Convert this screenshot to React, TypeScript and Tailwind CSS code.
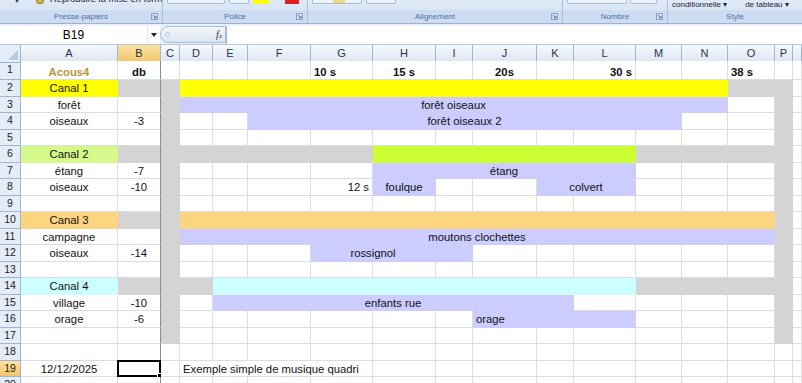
import React from "react";

type Fill = { bg: string; b: string; r: string };

const WHITE: Fill = { bg: "bg-white", b: "border-b-[#dadde2]", r: "border-r-[#dadde2]" };
const YEL: Fill = { bg: "bg-[#ffff00]", b: "border-b-[#ffff00]", r: "border-r-[#ffff00]" };
const GRY: Fill = { bg: "bg-[#d4d4d4]", b: "border-b-[#d4d4d4]", r: "border-r-[#d4d4d4]" };
const LAV: Fill = { bg: "bg-[#ccccff]", b: "border-b-[#ccccff]", r: "border-r-[#ccccff]" };
const LIM: Fill = { bg: "bg-[#ccff33]", b: "border-b-[#ccff33]", r: "border-r-[#ccff33]" };
const GRN: Fill = { bg: "bg-[#d6f98c]", b: "border-b-[#d6f98c]", r: "border-r-[#d6f98c]" };
const ORG: Fill = { bg: "bg-[#fdd580]", b: "border-b-[#fdd580]", r: "border-r-[#fdd580]" };
const CYN: Fill = { bg: "bg-[#ccffff]", b: "border-b-[#ccffff]", r: "border-r-[#ccffff]" };

type Seg = {
  c: number;
  span?: number;
  fill?: Fill;
  text?: string;
  align?: "l" | "c" | "r";
  bold?: boolean;
  gold?: boolean;
};

const GRID =
  "grid grid-cols-[21px_97px_43px_19px_33px_35px_63px_62px_63px_37px_64px_37px_62px_46px_46px_47px_18px_1fr]";

const LETTERS = ["A", "B", "C", "D", "E", "F", "G", "H", "I", "J", "K", "L", "M", "N", "O", "P", ""];

const SPAN: Record<number, string> = {
  1: "col-span-1",
  2: "col-span-2",
  3: "col-span-3",
  4: "col-span-4",
  5: "col-span-5",
  7: "col-span-7",
  8: "col-span-8",
  11: "col-span-11",
  12: "col-span-12",
};

// C and P are grey from row 2 to 17
const side = (): Seg[] => [
  { c: 2, fill: GRY },
  { c: 15, fill: GRY },
];

const rows: Seg[][] = [
  [
    { c: 0, text: "Acous4", bold: true, gold: true },
    { c: 1, text: "db", bold: true },
    { c: 6, text: "10 s", bold: true, align: "l" },
    { c: 7, text: "15 s", bold: true },
    { c: 9, text: "20s", bold: true },
    { c: 11, text: "30 s", bold: true, align: "r" },
    { c: 14, text: "38 s", bold: true, align: "l" },
  ],
  [
    { c: 0, fill: YEL, text: "Canal 1" },
    { c: 1, fill: GRY },
    { c: 2, fill: GRY },
    { c: 3, span: 11, fill: YEL },
    { c: 14, span: 2, fill: GRY },
  ],
  [{ c: 0, text: "forêt" }, ...side(), { c: 3, span: 11, fill: LAV, text: "forêt oiseaux" }],
  [
    { c: 0, text: "oiseaux" },
    { c: 1, text: "-3" },
    ...side(),
    { c: 5, span: 8, fill: LAV, text: "forêt oiseaux 2" },
  ],
  side(),
  [
    { c: 0, fill: GRN, text: "Canal 2" },
    { c: 1, fill: GRY },
    { c: 2, span: 5, fill: GRY },
    { c: 7, span: 5, fill: LIM },
    { c: 12, span: 4, fill: GRY },
  ],
  [
    { c: 0, text: "étang" },
    { c: 1, text: "-7" },
    ...side(),
    { c: 7, span: 5, fill: LAV, text: "étang" },
  ],
  [
    { c: 0, text: "oiseaux" },
    { c: 1, text: "-10" },
    ...side(),
    { c: 6, text: "12 s", align: "r" },
    { c: 7, fill: LAV, text: "foulque" },
    { c: 10, span: 2, fill: LAV, text: "colvert" },
  ],
  side(),
  [
    { c: 0, fill: ORG, text: "Canal 3" },
    { c: 1, fill: GRY },
    { c: 2, fill: GRY },
    { c: 3, span: 12, fill: ORG },
    { c: 15, fill: GRY },
  ],
  [{ c: 0, text: "campagne" }, ...side(), { c: 3, span: 12, fill: LAV, text: "moutons clochettes" }],
  [
    { c: 0, text: "oiseaux" },
    { c: 1, text: "-14" },
    ...side(),
    { c: 6, span: 2, fill: LAV, text: "rossignol" },
    { c: 8, fill: LAV },
  ],
  side(),
  [
    { c: 0, fill: CYN, text: "Canal 4" },
    { c: 1, fill: GRY },
    { c: 2, span: 2, fill: GRY },
    { c: 4, span: 8, fill: CYN },
    { c: 12, span: 4, fill: GRY },
  ],
  [
    { c: 0, text: "village" },
    { c: 1, text: "-10" },
    ...side(),
    { c: 4, span: 7, fill: LAV, text: "enfants rue" },
  ],
  [
    { c: 0, text: "orage" },
    { c: 1, text: "-6" },
    ...side(),
    { c: 9, span: 3, fill: LAV, text: "orage", align: "l" },
  ],
  side(),
  [],
  [
    { c: 0, text: "12/12/2025" },
    { c: 3, span: 4, text: "Exemple simple de musique quadri", align: "l" },
  ],
  [],
];

const Cell = ({ seg, sel }: { seg: Seg; sel?: boolean }) => {
  const fill = seg.fill ?? WHITE;
  const right = seg.c + (seg.span ?? 1) - 1 === 1 ? "border-r-[#8c8c8c]" : fill.r;
  const align =
    seg.align === "l" ? "justify-start pl-[3px]" : seg.align === "r" ? "justify-end pr-[3px]" : "justify-center";
  return (
    <div
      className={`${SPAN[seg.span ?? 1]} relative flex items-end pb-[1px] border-r border-b whitespace-nowrap overflow-visible ${fill.bg} ${fill.b} ${right} ${align}`}
    >
      {seg.text && (
        <span
          className={`leading-none ${seg.bold ? "font-bold" : ""} ${seg.gold ? "text-[#b8973a]" : "text-[#111]"}`}
        >
          {seg.text}
        </span>
      )}
      {sel && (
        <div className="absolute -left-px -top-px -right-px -bottom-px border-2 border-black">
          <div className="absolute -right-[3px] -bottom-[3px] w-[5px] h-[5px] bg-black border border-white" />
        </div>
      )}
    </div>
  );
};

const Row = ({ n, segs }: { n: number; segs: Seg[] }) => {
  const cells: React.ReactNode[] = [];
  let c = 0;
  while (c < 17) {
    const seg = segs.find((s) => s.c === c) ?? { c };
    cells.push(<Cell key={c} seg={seg} sel={n === 19 && c === 1} />);
    c += seg.span ?? 1;
  }
  return (
    <div className={`${GRID} ${n === 1 ? "h-[19px]" : "h-[16.5px]"}`}>
      <div
        className={`flex items-center justify-center border-r border-b border-[#9eb6ce] text-[10.5px] text-[#222] ${
          n === 19 ? "bg-gradient-to-b from-[#fbe3a6] to-[#f3c465]" : "bg-[#e4ecf7]"
        }`}
      >
        {n}
      </div>
      {cells}
    </div>
  );
};

const Group = ({ w, label, launcher = true, children }: { w: string; label: string; launcher?: boolean; children?: React.ReactNode }) => (
  <div className={`${w} flex flex-col border-r border-[#a9bfd9] shrink-0`}>
    <div className="h-[10px] relative overflow-hidden flex items-end">{children}</div>
    <div className="h-[13px] flex items-center justify-center relative text-[8px] text-[#4a6fad] bg-[#cddcf0]">
      {label}
      {launcher && (
        <svg className="absolute right-[4px] top-[3px]" width="7" height="7" viewBox="0 0 7 7">
          <rect x="0.5" y="0.5" width="6" height="6" fill="none" stroke="#8aa3c7" />
          <path d="M2 2 L5 5 M5 3 V5 H3" stroke="#5b79a6" fill="none" />
        </svg>
      )}
    </div>
  </div>
);

const Box = ({ w, children }: { w: string; children?: React.ReactNode }) => (
  <div className={`${w} h-[4px] border border-t-0 border-[#a7bcd9] bg-[#eef3fa] rounded-b-[2px] flex`}>{children}</div>
);

export default function App() {
  return (
    <div
      className="w-[802px] h-[383px] overflow-hidden bg-white text-[11.3px] text-black"
      style={{ fontFamily: '"Liberation Sans", Arial, sans-serif' }}
    >
      {/* ribbon (bottom part only) */}
      <div className="h-[24px] flex bg-gradient-to-b from-[#dfe9f6] to-[#d3e1f3] border-b border-[#9ab1d1]">
        <Group w="w-[163px]" label="Presse-papiers">
          <div className="absolute left-[15px] -top-[3px] text-[8px] leading-none text-[#333]">▾</div>
          <div className="absolute left-[36px] -top-[2px] w-[8px] h-[6px] rounded-full bg-[#d9b53a] border border-[#8a7a3a]" />
          <div className="absolute left-[50px] -top-[5px] text-[9.3px] leading-none text-[#223] whitespace-nowrap">
            Reproduire la mise en forme
          </div>
        </Group>
        <Group w="w-[145px]" label="Police">
          <div className="flex items-start gap-[4px] pl-[4px] self-start">
            <Box w="w-[58px]" />
            <Box w="w-[20px]" />
            <div className="w-[16px] h-[4px] bg-[#ffff00] mt-0" />
            <div className="w-[8px]" />
            <div className="w-[14px] h-[4px] bg-[#e02020]" />
          </div>
        </Group>
        <Group w="w-[255px]" label="Alignement">
          <div className="flex items-start gap-[4px] pl-[4px] self-start">
            <Box w="w-[50px]">
              <div className="ml-[20px] w-[12px] h-[3px] bg-[#f5d77a]" />
            </Box>
            <Box w="w-[30px]" />
          </div>
        </Group>
        <Group w="w-[105px]" label="Nombre">
          <div className="flex items-start gap-[3px] pl-[4px] self-start">
            <Box w="w-[60px]" />
            <Box w="w-[27px]" />
          </div>
        </Group>
        <div className="flex-1 flex flex-col">
          <div className="h-[10px] flex items-start gap-[18px] pl-[4px] text-[8px] leading-none text-[#223] pt-[1px] whitespace-nowrap">
            <span>conditionnelle ▾</span>
            <span>de tableau ▾</span>
          </div>
          <div className="h-[13px] flex items-center justify-center text-[8px] text-[#4a6fad] bg-[#cddcf0]">Style</div>
        </div>
      </div>

      {/* formula bar */}
      <div className="h-[21px] flex items-center bg-[#e9f0f9] border-b border-[#b6c8e0] pt-[1px]">
        <div className="w-[148px] h-[18px] bg-white flex items-center justify-center text-[12px] border-r border-[#dfe5ee]">
          B19
        </div>
        <div className="w-[12px] h-[18px] bg-white flex items-center justify-center">
          <svg width="6" height="4" viewBox="0 0 6 4">
            <path d="M0 0 H6 L3 4 Z" fill="#222" />
          </svg>
        </div>
        <div className="w-[66px] h-[17px] rounded-l-full border border-[#a9bcd6] bg-gradient-to-b from-[#f4f7fb] to-[#dbe5f2] flex items-center justify-between pl-[4px] pr-[3px]">
          <div className="w-[5px] h-[5px] rounded-full border border-[#b9c7da]" />
          <span className="text-[10px] italic text-[#333]" style={{ fontFamily: '"Liberation Serif", serif' }}>
            f<span className="text-[7px]">x</span>
          </span>
        </div>
        <div className="flex-1 h-[18px] bg-white border-l border-[#a9bcd6]" />
      </div>

      {/* column headers */}
      <div className={`${GRID} h-[16px]`}>
        <div className="relative bg-[#e4ecf7] border-r border-b border-[#9eb6ce]">
          <svg className="absolute right-[2px] bottom-[2px]" width="10" height="10" viewBox="0 0 10 10">
            <path d="M10 0 V10 H0 Z" fill="#b7c9e2" />
          </svg>
        </div>
        {LETTERS.map((l, i) => (
          <div
            key={i}
            className={`flex items-center justify-center border-r border-b border-[#9eb6ce] text-[11px] text-[#27354a] ${
              i === 1 ? "bg-gradient-to-b from-[#fbe3a6] to-[#f3c465]" : "bg-gradient-to-b from-[#f7f9fc] to-[#dde6f3]"
            }`}
          >
            {l}
          </div>
        ))}
      </div>

      {rows.map((segs, i) => (
        <Row key={i} n={i + 1} segs={segs} />
      ))}
    </div>
  );
}
